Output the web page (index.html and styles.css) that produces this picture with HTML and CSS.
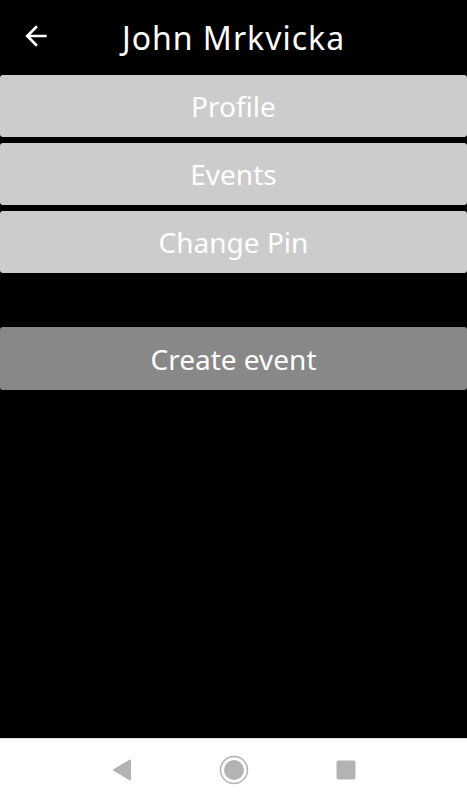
FILE: index.html
```html
<!DOCTYPE html>
<html>
<head>
<meta charset="utf-8"/>
<title>John Mrkvicka</title>
<link rel="stylesheet" href="styles.css">
</head>
<body>
<div class="screen">
  <div class="header">
    <span class="back">
      <svg width="32" height="32" viewBox="0 0 24 24"><path d="M20 11H7.83l5.59-5.59L12 4l-8 8 8 8 1.41-1.41L7.83 13H20v-2z" fill="#fff"/></svg>
    </span>
    <h1 class="title">John Mrkvicka</h1>
  </div>

  <div class="menu">
    <div class="btn">Profile</div>
    <div class="btn">Events</div>
    <div class="btn">Change Pin</div>
  </div>

  <div class="btn btn-dark">Create event</div>

  <div class="spacer"></div>

  <div class="navbar">
    <svg width="20" height="22" viewBox="0 0 20 22"><path d="M18 1.5 L2 11 L18 20.5 Z" fill="#b3b3b3" stroke="#b3b3b3" stroke-width="2" stroke-linejoin="round"/></svg>
    <svg width="30" height="30" viewBox="0 0 30 30"><circle cx="15" cy="15" r="13.5" fill="none" stroke="#b3b3b3" stroke-width="1.5"/><circle cx="15" cy="15" r="10" fill="#b3b3b3"/></svg>
    <svg width="20" height="20" viewBox="0 0 20 20"><rect x="0.5" y="0.5" width="19" height="19" rx="2" fill="#b3b3b3"/></svg>
  </div>
</div>
</body>
</html>
```

FILE: styles.css
```css
html, body {
  margin: 0;
  padding: 0;
  background-color: black;
}

body {
  font-family: "Noto Sans", "Liberation Sans", sans-serif;
  color: white;
}

.screen {
  height: 800px;
  display: flex;
  flex-direction: column;
}

.header {
  height: 75px;
  display: flex;
  align-items: center;
  position: relative;
}

.back {
  position: absolute;
  left: 20px;
  top: 20px;
  width: 32px;
  height: 32px;
}

.back svg {
  display: block;
}

.title {
  flex: 1;
  margin: 0;
  text-align: center;
  font-size: 32px;
  font-weight: normal;
  letter-spacing: 1px;
  line-height: 40px;
  padding-top: 1px;
}

.menu {
  display: flex;
  flex-direction: column;
  gap: 6px;
}

.btn {
  height: 62px;
  display: flex;
  align-items: center;
  justify-content: center;
  background-color: #cccccc;
  border-radius: 3px;
  font-size: 28px;
}

.btn-dark {
  margin-top: 54px;
  height: 63px;
  background-color: #888888;
}

.spacer {
  flex: 1;
}

.navbar {
  height: 61px;
  background-color: white;
  border-top: 1px solid #e0e0e0;
  display: flex;
  align-items: center;
  justify-content: center;
  gap: 87px;
}

.navbar svg {
  display: block;
}
```
